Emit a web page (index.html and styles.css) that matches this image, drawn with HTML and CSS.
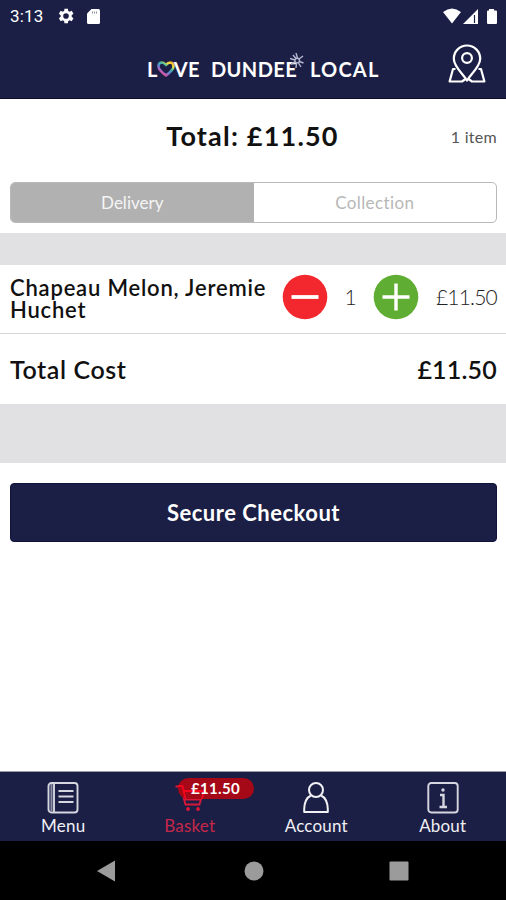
FILE: index.html
```html
<!DOCTYPE html>
<html lang="en">
<head>
<meta charset="utf-8">
<title>Basket</title>
<link rel="stylesheet" href="styles.css">
</head>
<body>
<header class="header">
  <div class="status">
    <span class="clock">3:13</span>
    <svg class="gear" width="18" height="18" viewBox="2 1.500 21 21"><path fill="#fff" fill-rule="evenodd" d="M19.1 12.9a7 7 0 0 0 0-1.8l2.1-1.6-2-3.5-2.500 1a7.500 7.500 0 0 0-1.600-.9L14.700 3.400h-4l-.4 2.700c-.6.200-1.100.5-1.600.9l-2.500-1-2 3.500 2.100 1.600a7 7 0 0 0 0 1.800l-2.100 1.600 2 3.500 2.500-1c.5.4 1 .7 1.600.9l.4 2.700h4l.4-2.700c.6-.2 1.100-.5 1.600-.9l2.500 1 2-3.500zM12.500 15.300a3.300 3.300 0 1 1 0-6.600 3.300 3.300 0 0 1 0 6.600z"/></svg>
    <svg class="sd" width="13" height="15" viewBox="0 0 13 15"><path fill="#fff" d="M4.500 0H11.500Q13 0 13 1.500V13.500Q13 15 11.500 15H1.500Q0 15 0 13.500V4.500Z"/><path stroke="#1c1f45" stroke-opacity=".5" d="M5.500 2.500v2M7.500 2.500v2M9.500 2.500v2"/></svg>
    <svg class="signals" width="55" height="17" viewBox="0 0 55 17"><path fill="#fff" d="M0 4Q9 -3 18 4L9 15.500ZM35 1V16H20Z"/><path stroke="#1c1f45" stroke-width="1.200" d="M31.500 7v8"/><path fill="#fff" d="M46 1h5v1.500h2Q54 2.500 54 3.500V15Q54 16 53 16H45Q44 16 44 15V3.500Q44 2.500 45 2.500h1z"/></svg>
  </div>
  <div class="titlebar">
    <div class="brand">
      <span class="love">L<svg class="heart" width="18" height="16" viewBox="0 0 18 16"><defs><linearGradient id="rainbow" x1="1" y1="0" x2=".2" y2="1"><stop offset="0" stop-color="#f6a32c"/><stop offset=".22" stop-color="#f0e23b"/><stop offset=".4" stop-color="#43b8a0"/><stop offset=".6" stop-color="#548dd0"/><stop offset=".8" stop-color="#b65fbd"/><stop offset="1" stop-color="#f04d68"/></linearGradient></defs><path fill="none" stroke="url(#rainbow)" stroke-width="2.600" stroke-linejoin="round" d="M9 4Q7 1.500 4.500 1.500Q1.500 1.800 1.500 5.200C1.500 8.500 5 11.500 9 14.400C13 11.500 16.500 8.500 16.500 5.200Q16.500 1.800 13.500 1.500Q11 1.500 9 4Z"/></svg>VE</span>
      <span class="dundee">DUNDEE<svg class="star" width="14" height="16" viewBox="0 0 14 16"><path fill="none" stroke="#b4b8cf" stroke-width="1.400" d="M6 0L7.500 5M13 3L9 6M13.500 10L9.500 8.500M11 14L8.500 10M6 15L6.500 10M1 11L5 9M0 5.500L5 7M3 2L6 5.500"/><circle cx="7.200" cy="7.600" r="2.300" fill="#1c1f45" stroke="#b4b8cf" stroke-width="1.400"/></svg></span>
      <span class="local">LOCAL</span>
    </div>
    <svg class="pin" width="38" height="40" viewBox="0 0 38 40"><g fill="none" stroke="#fff" stroke-width="2.200" stroke-linejoin="round"><path d="M19 36.500C15 30 5.800 22.500 5.800 14.700A13.200 13.200 0 0 1 32.200 14.700C32.200 22.500 23 30 19 36.500Z"/><circle cx="19" cy="14" r="4.900"/><path d="M7.500 25H5L1.600 37.500H14L17.500 35M30.500 25H33L36.400 37.500H24L20.500 35"/></g></svg>
  </div>
</header>
<section class="summary">
  <div class="total-line"><h1 class="total">Total: £11.50</h1><span class="count">1 item</span></div>
  <div class="toggle"><div class="option selected"><span class="delivery">Delivery</span></div><div class="option"><span class="collection">Collection</span></div></div>
</section>
<main class="basket">
  <div class="item">
    <div class="name">Chapeau Melon, Jeremie Huchet</div>
    <svg class="minus" width="46" height="46" viewBox="0 0 46 46"><circle cx="23" cy="23" r="22.300" fill="#f3282e"/><path stroke="#fff" stroke-width="3.800" d="M9.500 23h27"/></svg>
    <span class="qty">1</span>
    <svg class="plus" width="46" height="46" viewBox="0 0 46 46"><circle cx="23" cy="23" r="22.300" fill="#5fad32"/><path stroke="#fff" stroke-width="3.400" d="M9.500 23h27M23 9.500v27"/></svg>
    <span class="price">£11.50</span>
  </div>
  <div class="cost"><span class="cost-label">Total Cost</span><span class="cost-value">£11.50</span></div>
</main>
<section class="checkout"><button class="pay">Secure Checkout</button></section>
<nav class="tabs">
  <div class="tab"><svg width="32" height="32" viewBox="0 0 32 32"><g fill="none" stroke="#d5d6df" stroke-width="1.900"><rect x="1.500" y="1" width="29" height="29.500" rx="3"/><path d="M7 1v29.500M11.500 9h15M11.500 14.500h15M11.500 20h15"/></g><path stroke="#8f91a8" stroke-width="2" d="M4.500 2v27.500"/></svg><span class="tab-menu">Menu</span></div>
  <div class="tab active"><svg width="32" height="32" viewBox="0 0 32 32"><g fill="none" stroke="#dc1738" stroke-width="1.800"><path d="M1.500 4.500H6.500L11.500 22.500H25.500L29 10H9M11 17.500H27"/></g><circle cx="14" cy="27" r="1.900" fill="#dc1738"/><circle cx="24" cy="27" r="1.900" fill="#dc1738"/></svg><span class="tab-basket">Basket</span><span class="badge"><svg class="badge-cart" width="30" height="17" viewBox="0 0 30 17"><path fill="none" stroke="#f5051d" stroke-width="1.800" d="M0 4L4.500 4L7.500 17M6 9H26L24 17"/></svg><span class="badge-text">£11.50</span></span></div>
  <div class="tab"><svg width="32" height="32" viewBox="0 0 32 32"><g fill="none" stroke="#f1f1f5" stroke-width="2"><circle cx="16" cy="8" r="7"/><path stroke-linejoin="round" d="M11 13.500C6.500 15.500 4.500 20 4.200 27V30H27.800V27C27.500 20 25.500 15.500 21 13.500"/></g></svg><span class="tab-account">Account</span></div>
  <div class="tab"><svg width="32" height="32" viewBox="0 0 32 32"><g fill="none" stroke="#d5d6df" stroke-width="1.900"><rect x="1.300" y="1" width="29.400" height="29.500" rx="3"/><path stroke-width="2.400" d="M13 13h3.500v12M12.500 25h7.500"/></g><circle cx="16" cy="8" r="1.700" fill="#d5d6df"/></svg><span class="tab-about">About</span></div>
</nav>
<footer class="system">
  <svg width="18" height="22" viewBox="0 0 18 22"><path fill="#9b9b9b" d="M18 .5V21.500L0 11Z"/></svg>
  <svg class="home" width="20" height="20" viewBox="0 0 20 20"><circle cx="10" cy="10" r="9.500" fill="#9b9b9b"/></svg>
  <svg width="20" height="20" viewBox="0 0 20 20"><rect x=".5" y=".5" width="19" height="19" rx="1" fill="#9b9b9b"/></svg>
</footer>
</body>
</html>
```
FILE: styles.css
```css
* { box-sizing: border-box; }
body { margin: 0; width: 506px; height: 900px; overflow: hidden; display: flex; flex-direction: column; background: #fff; color: #111; font-family: Lato, "Liberation Sans", sans-serif; white-space: nowrap; }
svg { display: block; flex: none; }
.header { height: 99px; flex: none; background: #1c1f45; border-bottom: 1px solid #0b0d26; color: #fff; }
.status { height: 32px; display: flex; align-items: center; padding: 0 9px 0 10px; }
.clock { font: 17px Roboto, sans-serif; width: 47px; letter-spacing: .2px; }
.sd { margin-left: 12px; }
.signals { margin-left: auto; margin-right: -1px; }
.titlebar { height: 66px; display: flex; align-items: center; padding: 0 20px 0 147px; }
.brand { display: flex; width: 236px; height: 24px; margin-top: 8px; font-size: 20px; line-height: 24px; font-weight: 700; }
.love { display: flex; width: 64px; letter-spacing: .4px; }
.heart { margin: 4px -1px 0 -1px; }
.dundee { display: flex; width: 99px; letter-spacing: .4px; }
.star { margin: -4px 0 0 -7px; }
.local { letter-spacing: 1.2px; }
.pin { margin-left: auto; margin-top: -2px; }
.summary { height: 134px; flex: none; padding: 13px 9px 0 10px; }
.total-line { display: grid; grid-template-columns: 1fr auto 1fr; align-items: center; height: 46px; }
.total { grid-column: 2; margin: 0 1px 0 -1px; font-size: 27px; font-weight: 700; letter-spacing: 1.2px; }
.count { justify-self: end; font-size: 16px; letter-spacing: .3px; color: #555; margin-top: 2px; }
.toggle { display: flex; height: 41px; margin-top: 24px; border: 1px solid #b9b9b9; border-radius: 5px; overflow: hidden; font-size: 17px; color: #b7b7b7; }
.option { flex: 1; display: flex; align-items: center; justify-content: center; }
.selected { background: #b1b1b1; color: #f5f5f5; }
.collection { letter-spacing: .4px; }
.basket { height: 230px; flex: none; border-top: 32px solid #e1e1e3; border-bottom: 59px solid #e1e1e3; }
.item { height: 69px; display: flex; align-items: center; padding: 0 9px 0 10px; border-bottom: 1px solid #d7d7d9; }
.name { width: 272px; padding-right: 8px; white-space: normal; font-size: 22px; line-height: 22px; font-weight: 600; letter-spacing: .8px; }
.minus, .plus { margin-top: -4px; }
.qty { width: 45px; text-align: center; font-size: 21px; margin-top: -6px; font-weight: 300; color: #222; }
.price { margin-left: auto; font-size: 21px; margin-top: -6px; letter-spacing: -.8px; font-weight: 300; color: #222; }
.cost { height: 70px; display: flex; align-items: center; justify-content: space-between; padding: 0 9px 1px 10px; font-size: 25px; font-weight: 600; }
.cost-label { letter-spacing: .6px; }
.cost-value { letter-spacing: .2px; }
.checkout { padding: 20px 9px 0 10px; flex: 1; }
.pay { display: block; width: 100%; height: 59px; padding: 0; border: 1px solid #10133b; border-radius: 4px; background: #1c1f45; color: #fff; font: 700 22px Lato, sans-serif; letter-spacing: .5px; }
.tabs { height: 70px; flex: none; display: grid; grid-template-columns: repeat(4, 1fr); background: #1c1f45; border-top: 1px solid #999ca4; color: #f0f0f5; }
.tab { position: relative; display: flex; flex-direction: column; align-items: center; padding-top: 10px; font-size: 17px; line-height: 22px; gap: 1px; letter-spacing: .2px; }
.active { color: #c52749; }
.badge { position: absolute; left: 51px; top: 6px; width: 76px; height: 21px; border-radius: 11px; background: #a50816; color: #fff; text-align: center; font-size: 15px; line-height: 21px; font-weight: 700; letter-spacing: .3px; }
.badge-cart { position: absolute; left: 0; top: 4px; }
.badge-text { position: relative; }
.system { height: 59px; flex: none; display: flex; align-items: center; justify-content: space-between; padding: 0 97px; background: #000; }
.home { margin-left: 3px; }
```
